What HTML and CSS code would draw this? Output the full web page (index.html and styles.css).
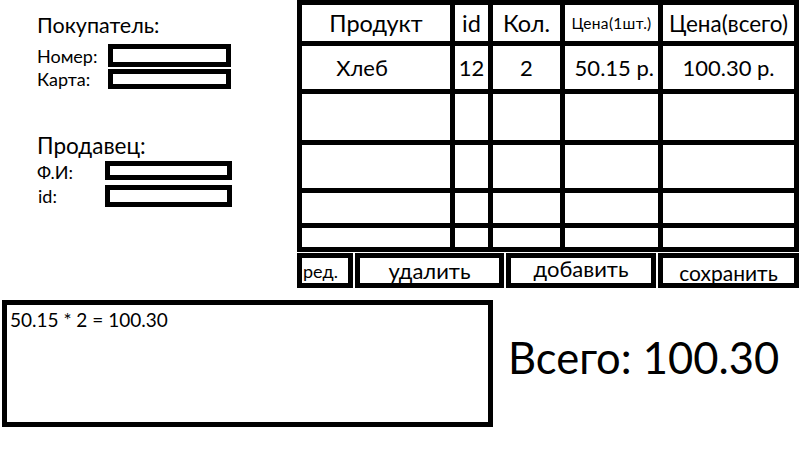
FILE: index.html
```html
<!DOCTYPE html>
<html lang="ru">
<head>
<meta charset="utf-8">
<title>Чек</title>
<link rel="stylesheet" href="styles.css">
</head>
<body>
<div class="page">
  <div class="top">
    <div class="left">
      <div class="section buyer">
        <div class="title">Покупатель:</div>
        <div class="field f-num"><span class="label">Номер:</span><span class="input"></span></div>
        <div class="field f-card"><span class="label">Карта:</span><span class="input"></span></div>
      </div>
      <div class="section seller">
        <div class="title t-seller">Продавец:</div>
        <div class="field f-name"><span class="label">Ф.И:</span><span class="input"></span></div>
        <div class="field f-id"><span class="label">id:</span><span class="input"></span></div>
      </div>
    </div>
    <div class="right">
      <div class="grid">
        <div class="cell head">Продукт</div>
        <div class="cell head">id</div>
        <div class="cell head">Кол.</div>
        <div class="cell head small">Цена(1шт.)</div>
        <div class="cell head total-h">Цена(всего)</div>

        <div class="cell data prod">Хлеб</div>
        <div class="cell data">12</div>
        <div class="cell data">2</div>
        <div class="cell data price">50.15 р.</div>
        <div class="cell data">100.30 р.</div>

        <div class="cell"></div><div class="cell"></div><div class="cell"></div><div class="cell"></div><div class="cell"></div>
        <div class="cell"></div><div class="cell"></div><div class="cell"></div><div class="cell"></div><div class="cell"></div>
        <div class="cell"></div><div class="cell"></div><div class="cell"></div><div class="cell"></div><div class="cell"></div>
        <div class="cell"></div><div class="cell"></div><div class="cell"></div><div class="cell"></div><div class="cell"></div>
      </div>
      <div class="buttons">
        <div class="btn b-edit">ред.</div>
        <div class="btn b-del">удалить</div>
        <div class="btn b-add">добавить</div>
        <div class="btn b-save">сохранить</div>
      </div>
    </div>
  </div>
  <div class="bottom">
    <div class="note">50.15 * 2 = 100.30</div>
    <div class="total">Всего: 100.30</div>
  </div>
</div>
</body>
</html>
```

FILE: styles.css
```css
html, body {
  margin: 0;
  padding: 0;
  background: #fff;
}
body {
  font-family: Lato, "Liberation Sans", sans-serif;
  color: #000;
  width: 800px;
  height: 449px;
  overflow: hidden;
}
.top {
  display: flex;
  height: 288px;
}
.left {
  width: 297px;
  box-sizing: border-box;
  padding: 13px 0 0 37px;
}
.title {
  font-size: 21.5px;
  line-height: 24px;
}
.t-seller {
  font-size: 22.5px;
}
.field {
  display: flex;
  align-items: center;
}
.label {
  font-size: 18px;
  line-height: 20px;
}
.input {
  box-sizing: border-box;
  border: 5px solid #000;
  background: #fff;
}
.f-num { margin-top: 7px; height: 23px; }
.f-card { margin-top: 2px; height: 20px; }
.f-num .label, .f-card .label { width: 71px; }
.f-num .input, .f-card .input { width: 123px; height: 23px; }
.f-card .input { height: 20px; }
.seller { margin-top: 45px; }
.f-name { margin-top: 3px; height: 19px; }
.f-id { margin-top: 5px; height: 22px; }
.f-name .label, .f-id .label { width: 68px; }
.f-name .label { padding-top: 2px; }
.f-id .label { padding-left: 1px; width: 67px; }
.f-name .input { width: 127px; height: 19px; }
.f-id .input { width: 127px; height: 22px; }

.right {
  width: 503px;
}
.grid {
  display: grid;
  grid-template-columns: 148px 33px 67px 93px 131px;
  grid-template-rows: 36px 43px 46px 43px 30px 19px;
  gap: 5px;
  padding: 5px;
  width: 492px;
  background: #000;
}
.cell {
  background: #fff;
  display: flex;
  align-items: center;
  justify-content: center;
  white-space: nowrap;
}
.head {
  font-size: 23.5px;
}
.head.total-h {
  font-size: 22.5px;
}
.head.small {
  font-size: 15.5px;
  letter-spacing: 0.3px;
}
.data {
  font-size: 22px;
}
.prod {
  padding-right: 28px;
}
.price {
  justify-content: flex-end;
  padding-right: 4px;
}
.buttons {
  display: flex;
  justify-content: space-between;
  margin-top: 1px;
  height: 35px;
  width: 502px;
}
.btn {
  box-sizing: border-box;
  border: 5px solid #000;
  font-size: 22px;
  display: flex;
  align-items: center;
  justify-content: center;
  white-space: nowrap;
}
.b-edit { width: 56px; justify-content: flex-start; padding-left: 1px; font-size: 18px; }
.b-del { width: 149px; }
.b-add { width: 150px; padding-bottom: 4px; }
.b-save { width: 141px; font-size: 21px; padding-top: 3px; }

.bottom {
  display: flex;
  align-items: flex-start;
  margin-top: 12px;
}
.note {
  box-sizing: border-box;
  margin-left: 2px;
  width: 491px;
  height: 127px;
  border: 5px solid #000;
  padding: 4px 3px;
  font-size: 19px;
  line-height: 22px;
}
.total {
  margin-left: 15px;
  margin-top: 35px;
  font-size: 43.5px;
  line-height: 44px;
  white-space: nowrap;
}
```
